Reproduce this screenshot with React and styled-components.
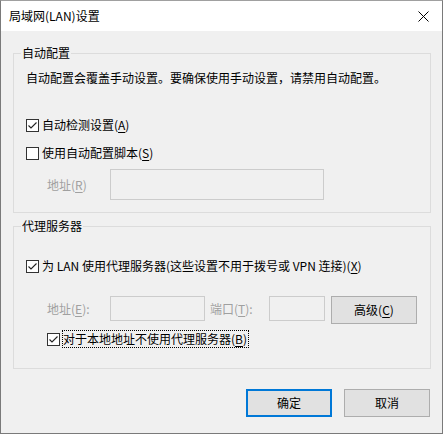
import React from "react";
import styled, { createGlobalStyle } from "styled-components";

const GlobalStyle = createGlobalStyle`
  html, body {
    margin: 0;
    padding: 0;
    background: #f0f0f0;
  }
  * {
    box-sizing: border-box;
  }
`;

const FONT = `"Segoe UI", "Noto Sans CJK SC", sans-serif`;

const Window = styled.div`
  width: 443px;
  height: 434px;
  display: flex;
  flex-direction: column;
  border: 1px solid #7a7a7a;
  border-top-color: #a0a0a0;
  background: #f0f0f0;
  font-family: ${FONT};
  font-size: 12px;
  color: #000;
`;

const TitleBar = styled.div`
  height: 30px;
  flex-shrink: 0;
  display: flex;
  align-items: center;
  justify-content: space-between;
  padding: 0 9px 0 8px;
  background: #fff;
  line-height: 16px;
`;

const CloseButton = styled.div`
  width: 16px;
  height: 16px;
  display: flex;
  align-items: center;
  justify-content: center;
  margin-right: 2px;
`;

const Body = styled.div`
  flex: 1;
  display: flex;
  flex-direction: column;
  padding: 15px 11px 0 12px;
`;

const Group = styled.fieldset`
  margin: ${(p) => p.$top || 0}px 0 0 0;
  padding: 0 12px ${(p) => p.$bottom || 12}px 12px;
  border: 1px solid #dcdcdc;
  min-width: 0;
  width: 418px;
  display: flex;
  flex-direction: column;
`;

const Legend = styled.legend`
  padding: 0 1px;
  margin-left: -5px;
  line-height: 14px;
`;

const Description = styled.div`
  line-height: 16px;
  margin-top: 10px;
`;

const CheckRow = styled.label`
  display: flex;
  align-items: center;
  gap: ${(p) => (p.$focused ? 2 : 3)}px;
  margin-top: ${(p) => p.$top || 0}px;
  margin-left: ${(p) => p.$indent || 0}px;
  height: ${(p) => (p.$focused ? 18 : 16)}px;
  line-height: 16px;
  white-space: nowrap;
`;

const Box = styled.span`
  width: 13px;
  height: 13px;
  flex-shrink: 0;
  border: 1px solid #333;
  background: #fff;
  display: flex;
  align-items: center;
  justify-content: center;
`;

const CheckText = styled.span`
  padding: 0 1px 0 ${(p) => (p.$focused ? 0 : 0)}px;
  border: 1px ${(p) => (p.$focused ? "dotted #000" : "solid transparent")};
  border-width: ${(p) => (p.$focused ? 1 : 0)}px;
  line-height: 16px;
`;

const Key = styled.span`
  text-decoration: underline;
  text-underline-offset: 2px;
`;

const FieldRow = styled.div`
  display: flex;
  align-items: ${(p) => p.$align || "center"};
  margin-top: ${(p) => p.$top || 0}px;
  margin-left: 21px;
`;

const FieldLabel = styled.span`
  width: ${(p) => p.$width}px;
  margin-left: ${(p) => p.$gap || 0}px;
  color: #a0a0a0;
  line-height: 16px;
  flex-shrink: 0;
  white-space: nowrap;
  align-self: ${(p) => (p.$top ? "flex-start" : "center")};
  margin-top: ${(p) => p.$top || 0}px;
`;

const TextInput = styled.div`
  width: ${(p) => p.$width}px;
  height: ${(p) => p.$height}px;
  border: 1px solid #cccccc;
  background: #f0f0f0;
  flex-shrink: 0;
`;

const Button = styled.button`
  width: 86px;
  height: 28px;
  flex-shrink: 0;
  margin-left: ${(p) => p.$gap || 0}px;
  padding: 0;
  font-family: ${FONT};
  font-size: 12px;
  color: #000;
  background: #e1e1e1;
  border: ${(p) => (p.$default ? "2px solid #0078d7" : "1px solid #adadad")};
  border-radius: 0;
  line-height: 16px;
`;

const Footer = styled.div`
  display: flex;
  justify-content: flex-end;
  gap: 12px;
  margin-top: 20px;
  padding-right: 1px;
`;

function CheckMark() {
  return (
    <svg width="11" height="11" viewBox="0 0 11 11">
      <path d="M1.5 5.5 L4 8 L9.5 2.5" fill="none" stroke="#222" strokeWidth="1.1" />
    </svg>
  );
}

function Check({ checked, children, top, indent, focused }) {
  return (
    <CheckRow $top={top} $indent={indent} $focused={focused}>
      <Box>{checked && <CheckMark />}</Box>
      <CheckText $focused={focused}>{children}</CheckText>
    </CheckRow>
  );
}

export default function App() {
  return (
    <>
      <GlobalStyle />
      <Window>
        <TitleBar>
          <span>局域网(LAN)设置</span>
          <CloseButton>
            <svg width="11" height="11" viewBox="0 0 11 11">
              <path d="M0.5 0.5 L10.5 10.5 M10.5 0.5 L0.5 10.5" stroke="#000" strokeWidth="1" />
            </svg>
          </CloseButton>
        </TitleBar>
        <Body>
          <Group>
            <Legend>自动配置</Legend>
            <Description>
              自动配置会覆盖手动设置。要确保使用手动设置，请禁用自动配置。
            </Description>
            <Check checked top={31}>
              自动检测设置(<Key>A</Key>)
            </Check>
            <Check top={12}>
              使用自动配置脚本(<Key>S</Key>)
            </Check>
            <FieldRow $top={8}>
              <FieldLabel $width={63}>
                地址(<Key>R</Key>)
              </FieldLabel>
              <TextInput $width={214} $height={31} />
            </FieldRow>
          </Group>

          <Group $top={6} $bottom={20}>
            <Legend>代理服务器</Legend>
            <Check checked top={25}>
              为 LAN 使用代理服务器(这些设置不用于拨号或 VPN 连接)(<Key>X</Key>)
            </Check>
            <FieldRow $top={22} $align="flex-start">
              <FieldLabel $width={63} $top={5}>
                地址(<Key>E</Key>):
              </FieldLabel>
              <TextInput $width={95} $height={25} />
              <FieldLabel $width={59} $gap={5} $top={5}>
                端口(<Key>T</Key>):
              </FieldLabel>
              <TextInput $width={56} $height={25} />
              <Button $gap={6}>
                高级(<Key>C</Key>)
              </Button>
            </FieldRow>
            <Check checked focused top={6} indent={21}>
              对于本地地址不使用代理服务器(<Key>B</Key>)
            </Check>
          </Group>

          <Footer>
            <Button $default>确定</Button>
            <Button>取消</Button>
          </Footer>
        </Body>
      </Window>
    </>
  );
}
